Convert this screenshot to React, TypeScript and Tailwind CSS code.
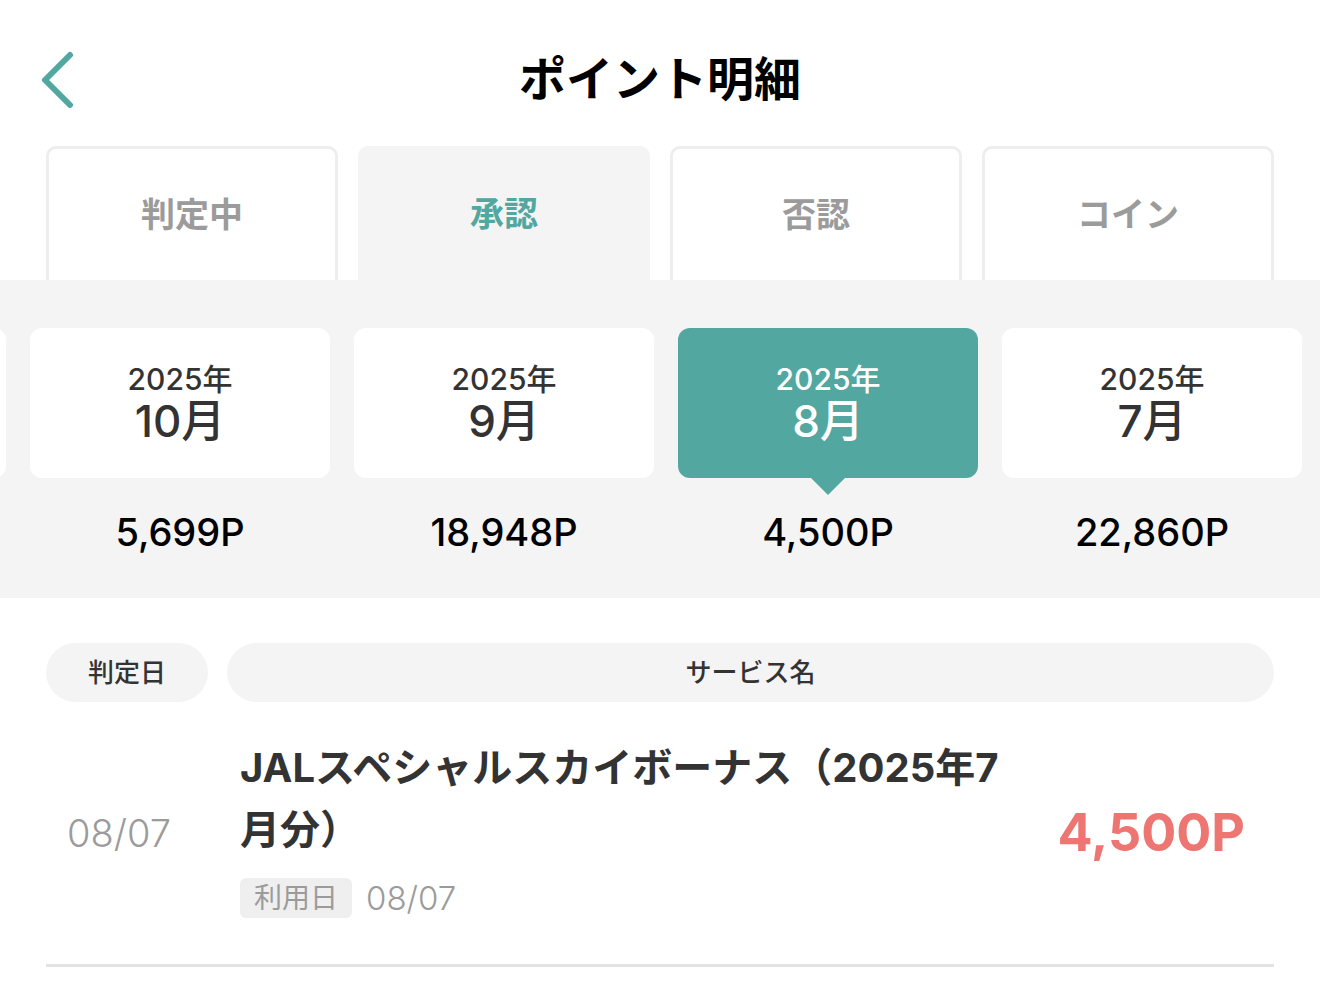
import React from 'react'

const tabs = ['判定中', '承認', '否認', 'コイン']

const months = [
  { year: '2025年', month: '10月', points: '5,699P' },
  { year: '2025年', month: '9月', points: '18,948P' },
  { year: '2025年', month: '8月', points: '4,500P', active: true },
  { year: '2025年', month: '7月', points: '22,860P' },
]

const MonthCard = ({ year, month, points, active }: { year: string; month: string; points: string; active?: boolean }) => (
  <div className="w-[300px] shrink-0 flex flex-col items-center">
    <div
      className={`relative w-full h-[150px] rounded-[12px] flex flex-col items-center justify-center ${
        active ? 'bg-[#52a7a0] text-white' : 'bg-white text-[#333333]'
      }`}
    >
      <span className="text-[30px] leading-[36px] font-medium">{year}</span>
      <span className="text-[44px] leading-[48px] font-medium">{month}</span>
      {active && (
        <span className="absolute left-1/2 -translate-x-1/2 top-full w-0 h-0 border-l-[17px] border-r-[17px] border-t-[17px] border-l-transparent border-r-transparent border-t-[#52a7a0]"></span>
      )}
    </div>
    <div className="mt-[35px] text-[38px] leading-none font-medium text-black">{points}</div>
  </div>
)

export default function App() {
  return (
    <div className="w-[1320px] h-[988px] bg-white overflow-hidden font-['Inter','Noto_Sans_CJK_JP',sans-serif]">
      {/* header */}
      <div className="relative h-[146px] pt-[10px] flex items-center justify-center">
        <button className="absolute left-[38px] top-[51px]">
          <svg width="38" height="58" viewBox="0 0 38 58" fill="none">
            <path d="M32 4 L7 29 L32 54" stroke="#52a7a0" strokeWidth="6" strokeLinecap="round" strokeLinejoin="round" />
          </svg>
        </button>
        <h1 className="text-[47px] leading-none font-bold text-black">ポイント明細</h1>
      </div>

      {/* tabs */}
      <div className="flex gap-[20px] px-[46px]">
        {tabs.map((t) => {
          const active = t === '承認'
          return (
            <div
              key={t}
              className={`w-[292px] h-[134px] rounded-t-[10px] flex items-center justify-center text-[34px] font-bold ${
                active
                  ? 'bg-[#f4f4f4] text-[#52a7a0]'
                  : 'border-[3px] border-b-0 border-[#eeeeee] bg-white text-[#9b9b9b]'
              }`}
            >
              {t}
            </div>
          )
        })}
      </div>

      {/* months */}
      <div className="h-[318px] bg-[#f4f4f4] overflow-hidden pt-[48px]">
        <div className="flex gap-[24px] ml-[-294px]">
          <div className="w-[300px] h-[150px] shrink-0 rounded-[12px] bg-white"></div>
          {months.map((m) => (
            <MonthCard key={m.month} {...m} />
          ))}
        </div>
      </div>

      {/* list */}
      <div className="px-[46px] pt-[45px]">
        <div className="flex gap-[19px]">
          <div className="w-[162px] h-[59px] rounded-full bg-[#f4f4f4] flex items-center justify-center text-[26px] font-medium text-[#333333]">
            判定日
          </div>
          <div className="flex-1 h-[59px] rounded-full bg-[#f4f4f4] flex items-center justify-center text-[26px] font-medium text-[#333333]">
            サービス名
          </div>
        </div>

        <div className="flex items-center pt-[35px] pb-[46px] border-b-[3px] border-[#e2e2e2]">
          <div className="w-[194px] shrink-0 pl-[21px] pt-[10px] text-[38px] leading-none font-light text-[#9b9b9b]">08/07</div>
          <div className="flex-1 min-w-0">
            <div className="w-[790px] text-[40px] leading-[62px] font-bold text-[#333333]">
              JALスペシャルスカイボーナス（2025年7月分）
            </div>
            <div className="mt-[17px] flex items-center gap-[14px]">
              <span className="h-[40px] px-[14px] rounded-[6px] bg-[#efefef] flex items-center text-[28px] text-[#9b9b9b]">
                利用日
              </span>
              <span className="text-[33px] leading-none font-light text-[#9b9b9b]">08/07</span>
            </div>
          </div>
          <div className="shrink-0 pr-[29px] pt-[10px] text-[52px] leading-none font-bold text-[#ee7672]">4,500P</div>
        </div>
      </div>
    </div>
  )
}
